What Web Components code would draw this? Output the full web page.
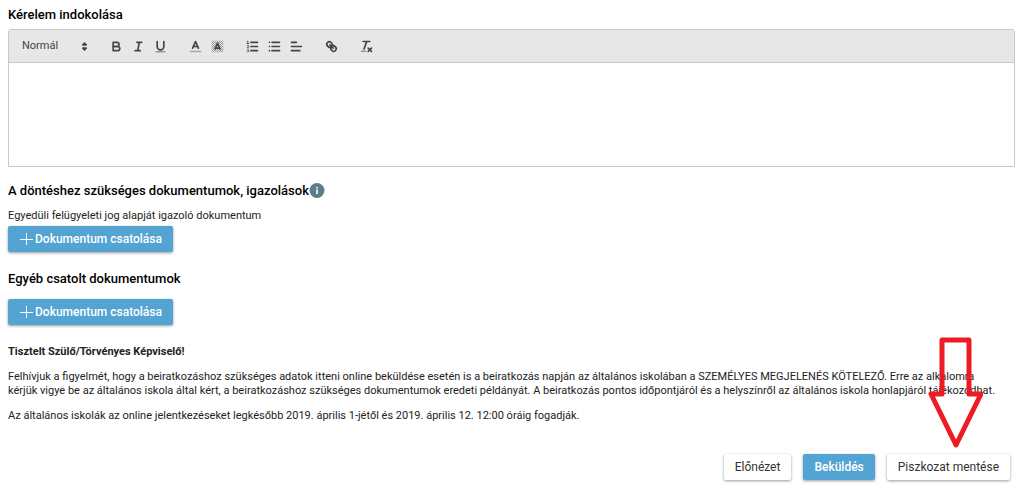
<!DOCTYPE html>
<html lang="hu">
<head>
<meta charset="utf-8">
<title>Kérelem</title>
<style>
    body {
        margin: 0;
        background: #fff;
        color: #222;
        font-family: Roboto, "Liberation Sans", sans-serif;
        font-size: 11px;
        line-height: 14px;
    }
</style>
</head>
<body>
<request-form></request-form>

<script>
const ICONS = {
    bold: `<path d="M5,4H9.5A2.5,2.5,0,0,1,12,6.5v0A2.5,2.5,0,0,1,9.5,9H5V4Z"/><path d="M5,9h5.5A2.5,2.5,0,0,1,13,11.5v0A2.5,2.5,0,0,1,10.5,14H5V9Z"/>`,
    italic: `<path d="M7,4H13M5,14H11M8,14L10,4"/>`,
    underline: `<path d="M5,3V9a4,4,0,0,0,8,0V3"/><rect class="fill" x="3" y="15" width="12" height="1" rx=".5"/>`,
    color: `<path class="pale" d="M3,15H15"/><path d="M5.5,11L9,3L12.5,11M11.6,9H6.4"/>`,
    background: `<defs><pattern id="hatch" width="2.4" height="2.4" patternUnits="userSpaceOnUse"><path class="fill" d="M0,1.2h1.2v1.2h-1.2zM1.2,0h1.2v1.2h-1.2z"/></pattern></defs><rect x="2" y="2" width="14" height="14" style="fill:url(#hatch);stroke:none;opacity:.5"/><path d="M6,12L9,5L12,12M11,11H7"/>`,
    ordered: `<path d="M7,4H15M7,9H15M7,14H15"/><path class="thin" d="M2.5,5.5H4.5M2.5,3L3.5,2.5V5.5M4.5,10.5h-2c0-.234,1.85-1.076,1.85-2.234A.959,.959,0,0,0,2.5,8.156M2.5,14.846a.959,.959,0,0,0,1.85-.109A.7,.7,0,0,0,3.75,14a.688,.688,0,0,0,.6-.736,.959,.959,0,0,0-1.85-.109"/>`,
    bullet: `<path d="M6,4H15M6,9H15M6,14H15M3,4H3M3,9H3M3,14H3"/>`,
    align: `<path d="M3,9H15M3,14H13M3,4H9"/>`,
    link: `<path d="M7,7L11,11"/><path d="M8.9,4.577a3.476,3.476,0,0,1,.36,4.679A3.476,3.476,0,0,1,4.577,8.9C3.185,7.5,2.035,6.4,4.217,4.217S7.5,3.185,8.9,4.577Z"/><path d="M13.423,9.1a3.476,3.476,0,0,0-4.679-.36,3.476,3.476,0,0,0,.36,4.679c1.392,1.392,2.5,2.542,4.679.36S14.815,10.5,13.423,9.1Z"/>`,
    clean: `<path d="M5,3H13M6,12L9.35,3M11,11L15,15M15,11L11,15"/><rect class="fill" x="2" y="14" width="7" height="1" rx=".5"/>`
};

class ToolButton extends HTMLElement {

    connectedCallback() {
        const name = this.getAttribute("icon");
        this.attachShadow({mode: "open"}).innerHTML = `
        <style>
            :host {
                display: block;
            }
            button {
                display: flex;
                align-items: center;
                justify-content: center;
                width: 22px;
                height: 20px;
                padding: 0;
                border: 0;
                background: none;
                cursor: pointer;
            }
            svg {
                width: 15px;
                height: 15px;
                fill: none;
                stroke: #444;
                stroke-width: 2;
                stroke-linecap: round;
                stroke-linejoin: round;
            }
            .fill {
                fill: #444;
                stroke: none;
            }
            .thin {
                stroke-width: 1;
            }
            .pale {
                opacity: 0.4;
            }
        </style>
        <button type="button" aria-label="${this.getAttribute("label")}">
            <svg viewBox="0 0 18 18">${ICONS[name]}</svg>
        </button>`;
    }
}

customElements.define("tool-button", ToolButton);


class TextEditor extends HTMLElement {

    constructor() {
        super();
        this.attachShadow({mode: "open"}).innerHTML = `
        <style>
            * {
                box-sizing: border-box;
            }
            :host {
                display: block;
                border: 1px solid #c8c8c8;
                border-radius: 3px 3px 0 0;
            }
            .toolbar {
                display: flex;
                align-items: center;
                gap: 13px;
                padding: 6px 13px;
                background: #e7e7e7;
                border-bottom: 1px solid #c8c8c8;
                border-radius: 2px 2px 0 0;
            }
            .group {
                display: flex;
            }
            .picker {
                display: grid;
                align-items: center;
                width: 70px;
            }
            .picker > * {
                grid-area: 1 / 1;
            }
            select {
                appearance: none;
                width: 100%;
                height: 20px;
                padding: 0;
                border: 0;
                background: none;
                color: #444;
                font: inherit;
            }
            .picker svg {
                justify-self: end;
                width: 15px;
                height: 15px;
                fill: #444;
                stroke: #444;
                stroke-width: 2;
                stroke-linejoin: round;
                pointer-events: none;
            }
            textarea {
                display: block;
                width: 100%;
                height: 103px;
                padding: 10px 13px;
                border: 0;
                outline: 0;
                resize: none;
                background: #fff;
                font: inherit;
            }
        </style>
        <div class="toolbar">
            <div class="picker">
                <select aria-label="Szövegstílus"><option>Normál</option></select>
                <svg viewBox="0 0 18 18"><path d="M7,11L9,13L11,11ZM7,7L9,5L11,7Z"/></svg>
            </div>
            <div class="group">
                <tool-button icon="bold" label="Félkövér"></tool-button>
                <tool-button icon="italic" label="Dőlt"></tool-button>
                <tool-button icon="underline" label="Aláhúzott"></tool-button>
            </div>
            <div class="group">
                <tool-button icon="color" label="Betűszín"></tool-button>
                <tool-button icon="background" label="Háttérszín"></tool-button>
            </div>
            <div class="group">
                <tool-button icon="ordered" label="Számozott lista"></tool-button>
                <tool-button icon="bullet" label="Felsorolás"></tool-button>
                <tool-button icon="align" label="Igazítás"></tool-button>
            </div>
            <tool-button icon="link" label="Hivatkozás"></tool-button>
            <tool-button icon="clean" label="Formázás törlése"></tool-button>
        </div>
        <textarea aria-label="Kérelem indokolása"></textarea>`;
    }
}

customElements.define("text-editor", TextEditor);


class ActionButton extends HTMLElement {

    constructor() {
        super();
        this.attachShadow({mode: "open"}).innerHTML = `
        <style>
            :host {
                display: block;
            }
            button {
                display: flex;
                align-items: center;
                gap: 2px;
                height: 26px;
                padding: 0 11px;
                border: 0;
                border-radius: 2px;
                background: #fff;
                color: #333;
                font: inherit;
                font-size: 12px;
                box-shadow: 0 1px 3px rgba(0, 0, 0, 0.4);
                cursor: pointer;
            }
            :host([primary]) button {
                background: #54a4d3;
                color: #fff;
                font-weight: 500;
            }
            ::slotted(svg) {
                width: 14px;
                height: 14px;
                stroke: #fff;
            }
        </style>
        <button type="button"><slot name="icon"></slot><span><slot></slot></span></button>`;
    }
}

customElements.define("action-button", ActionButton);


class SectionTitle extends HTMLElement {

    constructor() {
        super();
        this.attachShadow({mode: "open"}).innerHTML = `
        <style>
            :host {
                display: block;
            }
            h2 {
                display: flex;
                align-items: center;
                margin: 0;
                color: #000;
                font-size: 13px;
                line-height: 16px;
                font-weight: 500;
            }
        </style>
        <h2><slot></slot></h2>`;
    }
}

customElements.define("section-title", SectionTitle);


class RequestForm extends HTMLElement {

    constructor() {
        super();
        const plus = `<svg slot="icon" viewBox="0 0 14 14"><path d="M7.5 1v12M1 7.5h13"/></svg>`;
        this.attachShadow({mode: "open"}).innerHTML = `
        <style>
            :host {
                display: block;
                padding: 7px 13px 8px 8px;
            }
            text-editor {
                margin: 6px 0 16px;
            }
            p {
                margin: 0 0 11px;
            }
            .attach {
                display: flex;
                margin-bottom: 20px;
            }
            .hint {
                margin: 10px 0 3px;
            }
            .hint + .attach {
                margin-bottom: 19px;
            }
            .other {
                margin-top: 12px;
            }
            .info {
                width: 16px;
                height: 16px;
            }
            .greeting {
                font-weight: 700;
            }
            .actions {
                display: flex;
                justify-content: flex-end;
                position: relative;
                gap: 12px;
                margin: 31px 5px 0 0;
            }
            .arrow {
                position: absolute;
                right: 27px;
                bottom: 32px;
                width: 56px;
                height: 112px;
                fill: none;
                stroke: #ed1c24;
                stroke-width: 5;
                stroke-linejoin: round;
                pointer-events: none;
            }
        </style>
        <section-title>Kérelem indokolása</section-title>
        <text-editor></text-editor>

        <section-title>A döntéshez szükséges dokumentumok, igazolások<svg class="info" viewBox="0 0 16 16"><circle cx="8" cy="7.5" r="7.5" fill="#607d8b"/><path d="M7 4h2v1.5H7zM7 6.5h2v4.5H7z" fill="#dfe5e8"/></svg></section-title>
        <p class="hint">Egyedüli felügyeleti jog alapját igazoló dokumentum</p>
        <div class="attach"><action-button primary>${plus}Dokumentum csatolása</action-button></div>

        <section-title>Egyéb csatolt dokumentumok</section-title>
        <div class="attach other"><action-button primary>${plus}Dokumentum csatolása</action-button></div>

        <p class="greeting">Tisztelt Szülő/Törvényes Képviselő!</p>
        <p>Felhívjuk a figyelmét, hogy a beiratkozáshoz szükséges adatok itteni online beküldése esetén is a beiratkozás napján az általános iskolában a SZEMÉLYES MEGJELENÉS KÖTELEZŐ. Erre az alkalomra<br>kérjük vigye be az általános iskola által kért, a beiratkozáshoz szükséges dokumentumok eredeti példányát. A beiratkozás pontos időpontjáról és a helyszínről az általános iskola honlapjáról tájékozódhat.</p>
        <p>Az általános iskolák az online jelentkezéseket legkésőbb 2019. április 1-jétől és 2019. április 12. 12:00 óráig fogadják.</p>

        <div class="actions">
            <action-button>Előnézet</action-button>
            <action-button primary>Beküldés</action-button>
            <action-button>Piszkozat mentése</action-button>
            <svg class="arrow" viewBox="0 0 56 112"><path d="M15 4H42V58H54L29 109L4 58H15Z"/></svg>
        </div>`;
    }
}

customElements.define("request-form", RequestForm);
</script>
</body>
</html>
